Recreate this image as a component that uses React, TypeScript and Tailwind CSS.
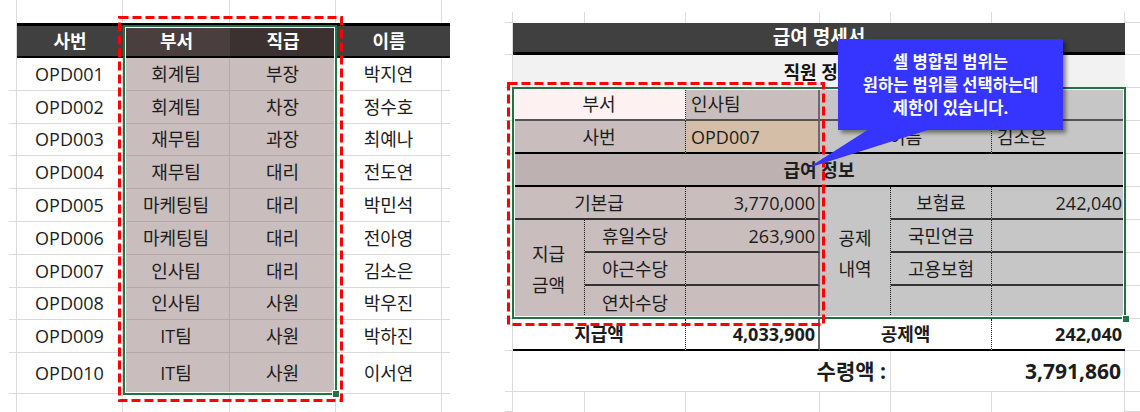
import type { ReactNode } from "react";

const people = [
  ["OPD001", "회계팀", "부장", "박지연"],
  ["OPD002", "회계팀", "차장", "정수호"],
  ["OPD003", "재무팀", "과장", "최예나"],
  ["OPD004", "재무팀", "대리", "전도연"],
  ["OPD005", "마케팅팀", "대리", "박민석"],
  ["OPD006", "마케팅팀", "대리", "전아영"],
  ["OPD007", "인사팀", "대리", "김소은"],
  ["OPD008", "인사팀", "사원", "박우진"],
  ["OPD009", "IT팀", "사원", "박하진"],
  ["OPD010", "IT팀", "사원", "이서연"],
];

const cols = "grid grid-cols-[17px_106px_107px_106px_106px_8px]";
const grid = "border-[#dadada]";
const sel = "bg-[#c9bdbd] border-r border-b border-[#b3a7a7]";

const mauve = "bg-[#c9bdbd]";
const gray = "bg-[#c6c6c6]";
const dot = "border-r [border-right-style:dotted] border-r-[#1a1a1a]";
const mid = "border-r-2 border-r-[#6e6868]";
const line = "border-b-2 border-b-[#333333]";
const heavy = "border-b-2 border-b-black";

const gutterRows = [
  "row-start-2", "row-start-3", "row-start-4", "row-start-5", "row-start-6", "row-start-7", "row-start-8",
  "row-start-9", "row-start-10", "row-start-11", "row-start-12", "row-start-13", "row-start-14",
];
const tableCols = ["col-start-2", "col-start-3", "col-start-4", "col-start-5", "col-start-6", "col-start-7"];

function C({ className = "", children }: { className?: string; children?: ReactNode }) {
  return <div className={`flex items-center text-[18px] leading-none text-[#1c1c1c] ${className}`}>{children}</div>;
}

function StaffList() {
  return (
    <div className="w-[460px] shrink-0">
      <div className={`${cols} h-[23px]`}>
        <div className={`border-r ${grid}`} />
        <div className={`border-r ${grid}`} />
        <div className={`border-r ${grid}`} />
        <div className={`border-r ${grid}`} />
        <div className={`border-r ${grid}`} />
        <div />
      </div>
      <div className={`${cols} h-[35px]`}>
        <div className={`border-r ${grid}`} />
        <div className="flex items-center justify-center border-t-[3px] border-b-2 border-black bg-[#404040] text-[18px] font-bold text-white">사번</div>
        <div className="flex items-center justify-center border-t-[3px] border-b-2 border-black bg-[#4a3e3e] text-[18px] font-bold text-white">부서</div>
        <div className="flex items-center justify-center border-t-[3px] border-b-2 border-black bg-[#3c3131] text-[18px] font-bold text-white">직급</div>
        <div className="flex items-center justify-center border-t-[3px] border-b-2 border-black bg-[#404040] text-[18px] font-bold text-white">이름</div>
        <div className="border-t-[3px] border-b-2 border-black bg-[#404040]" />
      </div>
      {people.map((p, i) => (
        <div key={p[0]} className={`${cols} ${i === people.length - 1 ? "h-[40.8px]" : "h-[32.8px]"}`}>
          <div className={`flex justify-end border-r ${grid}`}>
            <div className={`w-[7px] border-b ${grid}`} />
          </div>
          <C className={`justify-center border-r border-b ${grid}`}>{p[0]}</C>
          <C className={`justify-center ${sel}`}>{p[1]}</C>
          <C className={`justify-center ${sel}`}>{p[2]}</C>
          <C className={`justify-center border-r border-b ${grid}`}>{p[3]}</C>
          <div className={`border-b ${grid}`} />
        </div>
      ))}
      <div className={`${cols} h-[18px]`}>
        <div className={`border-r ${grid}`} />
        <div className={`border-r ${grid}`} />
        <div className={`border-r ${grid}`} />
        <div className={`border-r ${grid}`} />
        <div className={`border-r ${grid}`} />
        <div />
      </div>
    </div>
  );
}

function PaySlip() {
  return (
    <div className="grid w-[640px] shrink-0 grid-cols-[13px_72px_101px_134px_71px_101px_133px_15px] grid-rows-[12px_11px_32px_33px_33px_33px_33px_33px_33px_33px_33px_32px_41px_20px]">
      {gutterRows.map((r) => (
        <div key={`l${r}`} className={`col-start-1 ${r} pl-[5px]`}>
          <div className={`h-full border-r border-b ${grid}`} />
        </div>
      ))}
      {gutterRows.map((r) => (
        <div key={`r${r}`} className={`col-start-8 ${r} border-b ${grid}`} />
      ))}
      {tableCols.map((c) => (
        <div key={`t${c}`} className={`${c} row-start-2 border-r ${grid}`} />
      ))}
      {tableCols.map((c) => (
        <div key={`b${c}`} className={`${c} row-start-14 border-r ${grid}`} />
      ))}

      <div className="col-span-6 col-start-2 row-start-3 flex items-center justify-center border-b-[3px] border-black bg-[#404040] text-[19px] leading-none font-bold text-white">
        급여 명세서
      </div>
      <C className="col-span-6 col-start-2 row-start-4 justify-center bg-[#f2f2f2] font-bold text-[#111]">직원 정보</C>

      {/* 직급 / 대리 sit under the callout */}
      <C className={`col-span-2 col-start-2 row-start-5 justify-center border-b-2 border-b-[#545454] bg-[#fdf1f1] ${dot}`}>부서</C>
      <C className={`col-start-4 row-start-5 pl-[5px] border-b-2 border-b-[#545454] ${mauve} ${mid}`}>인사팀</C>
      <C className={`col-span-2 col-start-5 row-start-5 border-b-2 border-b-[#545454] ${gray} ${dot}`} />
      <C className={`col-start-7 row-start-5 border-b-2 border-b-[#545454] ${gray}`} />

      <C className={`col-span-2 col-start-2 row-start-6 justify-center ${heavy} ${mauve} ${dot}`}>사번</C>
      <C className={`col-start-4 row-start-6 pl-[5px] bg-[#d5bea8] ${heavy} ${mid}`}>OPD007</C>
      <C className={`col-span-2 col-start-5 row-start-6 justify-center ${heavy} ${gray} ${dot}`}>이름</C>
      <C className={`col-start-7 row-start-6 pl-[5px] ${heavy} ${gray}`}>김소은</C>

      <C className={`col-span-6 col-start-2 row-start-7 justify-center bg-[linear-gradient(to_right,#bdb1b1_307px,#bfbfbf_307px)] font-bold ${heavy}`}>
        급여 정보
      </C>

      <C className={`col-span-2 col-start-2 row-start-8 justify-center ${line} ${mauve} ${dot}`}>기본급</C>
      <C className={`col-start-4 row-start-8 justify-end pr-[3px] ${line} ${mauve} ${mid}`}>3,770,000</C>
      <C className={`col-start-2 row-span-3 row-start-9 flex-col justify-center gap-[13px] ${mauve} ${dot}`}>
        <span>지급</span>
        <span>금액</span>
      </C>
      <C className={`col-start-3 row-start-9 justify-center ${line} ${mauve} ${dot}`}>휴일수당</C>
      <C className={`col-start-4 row-start-9 justify-end pr-[3px] ${line} ${mauve} ${mid}`}>263,900</C>
      <C className={`col-start-3 row-start-10 justify-center ${line} ${mauve} ${dot}`}>야근수당</C>
      <C className={`col-start-4 row-start-10 ${line} ${mauve} ${mid}`} />
      <C className={`col-start-3 row-start-11 justify-center ${mauve} ${dot}`}>연차수당</C>
      <C className={`col-start-4 row-start-11 ${mauve} ${mid}`} />

      <C className={`col-start-5 row-span-4 row-start-8 flex-col justify-center gap-[13px] ${gray} ${dot}`}>
        <span>공제</span>
        <span>내역</span>
      </C>
      <C className={`col-start-6 row-start-8 justify-center ${line} ${gray} ${dot}`}>보험료</C>
      <C className={`col-start-7 row-start-8 justify-end pr-[3px] ${line} ${gray}`}>242,040</C>
      <C className={`col-start-6 row-start-9 justify-center ${line} ${gray} ${dot}`}>국민연금</C>
      <C className={`col-start-7 row-start-9 ${line} ${gray}`} />
      <C className={`col-start-6 row-start-10 justify-center ${line} ${gray} ${dot}`}>고용보험</C>
      <C className={`col-start-7 row-start-10 ${line} ${gray}`} />
      <C className={`col-start-6 row-start-11 ${gray} ${dot}`} />
      <C className={`col-start-7 row-start-11 ${gray}`} />

      <C className={`col-span-2 col-start-2 row-start-12 justify-center bg-white font-bold ${heavy} ${dot}`}>지급액</C>
      <C className={`col-start-4 row-start-12 justify-end pr-[3px] bg-white font-bold ${heavy} ${mid}`}>4,033,900</C>
      <C className={`col-span-2 col-start-5 row-start-12 justify-center bg-white font-bold ${heavy} ${dot}`}>공제액</C>
      <C className={`col-start-7 row-start-12 justify-end pr-[3px] bg-white font-bold ${heavy}`}>242,040</C>

      <C className={`col-span-4 col-start-2 row-start-13 justify-end pr-[4px] text-[21px] font-bold border-r border-b ${grid}`}>수령액 :</C>
      <C className={`col-span-2 col-start-6 row-start-13 justify-end pr-[3px] text-[21px] font-bold border-r border-b ${grid}`}>3,791,860</C>
    </div>
  );
}

function Dashed({ className, w, h }: { className: string; w: number; h: number }) {
  return (
    <svg className={`pointer-events-none absolute ${className}`} width={w} height={h}>
      <rect x={1.5} y={1.5} width={w - 3} height={h - 3} fill="none" stroke="#ff0000" strokeWidth={3} strokeDasharray="9 4" />
    </svg>
  );
}

export default function App() {
  return (
    <div className="relative flex h-[412px] w-[1140px] overflow-hidden bg-white font-['Open_Sans','Noto_Sans_CJK_KR',sans-serif]">
      <StaffList />
      <div className="w-[40px] shrink-0" />
      <PaySlip />

      {/* selection frames */}
      <div className="absolute left-[123px] top-[25px] h-[370px] w-[214px] border-2 border-[#217346] shadow-[inset_0_0_0_1px_#fff]" />
      <div className="absolute left-[333px] top-[391px] size-[6px] bg-[#217346] outline outline-1 outline-white" />
      <div className="absolute left-[512px] top-[87px] h-[232px] w-[614px] border-2 border-[#217346] shadow-[inset_0_0_0_1px_#fff]" />
      <div className="absolute left-[1123px] top-[316px] size-[6px] bg-[#217346] outline outline-1 outline-white" />

      <Dashed className="left-[118px] top-[16px]" w={225} h={386} />
      <Dashed className="left-[507px] top-[82px]" w={318} h={244} />

      {/* callout */}
      <div className="absolute left-[838px] top-[39px] flex h-[91px] w-[225px] flex-col items-center justify-center bg-[#3535ff] text-[16.5px] leading-[23px] font-bold text-white shadow-[3px_3px_4px_rgba(0,0,0,0.45)]">
        <span>셀 병합된 범위는</span>
        <span>원하는 범위를 선택하는데</span>
        <span>제한이 있습니다.</span>
      </div>
      <svg className="pointer-events-none absolute left-[800px] top-[120px]" width={140} height={60}>
        <polygon points="69,9 131,9 8,48" fill="#3535ff" />
      </svg>
    </div>
  );
}
